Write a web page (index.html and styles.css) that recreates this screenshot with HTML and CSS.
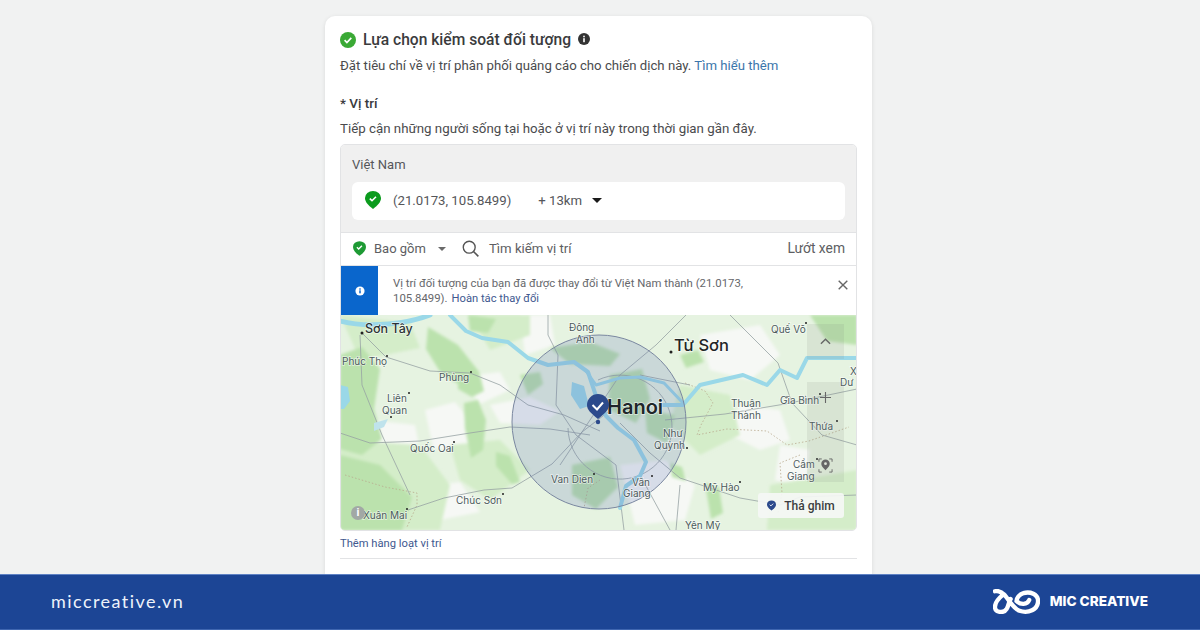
FILE: index.html
```html
<!DOCTYPE html>
<html lang="vi">
<head>
    <meta charset="UTF-8">
    <title>Lựa chọn kiểm soát đối tượng</title>
    <link rel="stylesheet" href="styles.css">
</head>
<body>

    <main class="stage">
        <section class="card">
            <div class="card-head">
                <svg class="check-icon" viewBox="0 0 16 16"><circle cx="8" cy="8" r="8" fill="#3aa935"/><path d="M4.6 8.2l2.3 2.3 4.4-4.6" fill="none" stroke="#fff" stroke-width="1.7"/></svg>
                <h1 class="card-title">Lựa chọn kiểm soát đối tượng</h1>
                <svg class="info-icon" viewBox="0 0 12 12"><circle cx="6" cy="6" r="6" fill="#333"/><rect x="5.2" y="5.2" width="1.6" height="4" fill="#fff"/><rect x="5.2" y="2.7" width="1.6" height="1.6" fill="#fff"/></svg>
            </div>
            <p class="card-sub">Đặt tiêu chí về vị trí phân phối quảng cáo cho chiến dịch này. <a href="#" class="link">Tìm hiểu thêm</a></p>

            <h2 class="field-label">* Vị trí</h2>
            <p class="field-sub">Tiếp cận những người sống tại hoặc ở vị trí này trong thời gian gần đây.</p>

            <div class="location-box">
                <div class="selected">
                    <div class="country">Việt Nam</div>
                    <div class="selected-row">
                        <svg class="pin-green" viewBox="0 0 16 18"><path d="M8 18C3 14 0 11 0 7a8 7 0 0 1 16 0c0 4-3 7-8 11z" fill="#0b9b1d"/><path d="M4.8 7.6l2.2 2.1 4-4" fill="none" stroke="#fff" stroke-width="1.6"/></svg>
                        <span class="coords">(21.0173, 105.8499)</span>
                        <span class="radius">+ 13km</span>
                        <span class="caret-big"></span>
                    </div>
                </div>

                <div class="search-row">
                    <svg class="pin-small" viewBox="0 0 16 18"><path d="M8 18C3 14 0 11 0 7a8 7 0 0 1 16 0c0 4-3 7-8 11z" fill="#1e9a34"/><path d="M4.8 7.6l2.2 2.1 4-4" fill="none" stroke="#fff" stroke-width="1.7"/></svg>
                    <span class="include">Bao gồm</span>
                    <span class="caret-small"></span>
                    <svg class="search-icon" viewBox="0 0 16 16"><circle cx="6.8" cy="6.8" r="5.6" fill="none" stroke="#555" stroke-width="1.3"/><path d="M10.8 10.8l4.6 4.6" stroke="#555" stroke-width="1.5"/></svg>
                    <span class="search-text">Tìm kiếm vị trí</span>
                    <span class="browse">Lướt xem</span>
                </div>

                <div class="notice">
                    <div class="notice-side">
                        <svg viewBox="0 0 12 12"><circle cx="6" cy="6" r="5.5" fill="#fff"/><rect x="5.1" y="5.2" width="1.8" height="3.6" fill="#0a66cc"/><rect x="5.1" y="2.8" width="1.8" height="1.6" fill="#0a66cc"/></svg>
                    </div>
                    <div class="notice-text">
                        <div>Vị trí đối tượng của bạn đã được thay đổi từ Việt Nam thành (21.0173,</div>
                        <div class="notice-line"><span>105.8499).</span><a href="#" class="undo">Hoàn tác thay đổi</a></div>
                    </div>
                    <svg class="close-icon" viewBox="0 0 10 10"><path d="M.7.7l8.6 8.6M9.3.7L.7 9.3" stroke="#666" stroke-width="1.4"/></svg>
                </div>

                <div class="map">
                    <svg class="map-art" viewBox="1 0 517 215">
                        <defs>
                            <filter id="soft" x="-10%" y="-10%" width="120%" height="120%"><feGaussianBlur stdDeviation="1.6"/></filter>
                        </defs>
                        <rect x="0" width="520" height="215" fill="#e6f3e1"/>
                        <!-- pale built-up patches -->
                        <g fill="#f6f8f5" filter="url(#soft)">
                            <path d="M85 95l30-8 18 22-4 28-36-4z"/>
                            <path d="M30 105l45 5 5 25-40 8-15-20z"/>
                            <path d="M120 62l40-5 10 18-30 14z"/>
                            <path d="M150 90l40-8 30 14-20 14-40-2z"/>
                            <path d="M360 20l60-10 20 30-30 25-40-10z"/>
                            <path d="M400 90l40 5 10 30-30 10-30-15z"/>
                            <path d="M280 150l45-5 30 25-10 35-50 5z"/>
                            <path d="M440 130l30 5-5 40-30-10z"/>
                            <path d="M60 175l60-8 20 30-60 12z"/>
                            <path d="M180 0l30 0 5 30-30 10z"/>
                        </g>
                        <!-- mid green fields -->
                        <g fill="#d4edc9" filter="url(#soft)">
                            <path d="M0 125l80 5 30 40-10 45H0z"/>
                            <path d="M110 130l50-5 30 30-40 30-30-20z"/>
                            <path d="M340 70l50 10 10 40-40 20-30-30z"/>
                            <path d="M430 170l87-15v60h-90z"/>
                            <path d="M130 0l60 0 0 20-40 15z"/>
                            <path d="M0 0l70 8 10 25-60 12z"/>
                        </g>
                        <!-- green areas -->
                        <g fill="#bbe2ad" filter="url(#soft)">
                            <path d="M0 40l22-8 18 22-6 40 8 30-20 16-22-6z"/>
                            <path d="M88 12l30 18 22 28-12 16-26-14-16-26z"/>
                            <path d="M118 58l22 2 4 16-12 6-14-8z"/>
                            <path d="M124 88l14-3 8 20-3 30-12 8-6-30z"/>
                            <path d="M0 140l40 10 32 32-10 33H0z"/>
                            <path d="M156 137l14 4 10 26-8 2-16-18z"/>
                            <path d="M128 0l28 4-8 14-18-2z"/>
                            <path d="M180 60l20-3 3 12-15 11z"/>
                            <path d="M210 33l40-6 30 12-10 12-40-2z"/>
                            <path d="M270 60l32-6 8 30-14 24-28-14z"/>
                            <path d="M232 150l38-8 8 30-22 22-24-14z"/>
                            <path d="M305 95l30 5-8 28-20-10z"/>
                            <path d="M340 40l18-5 6 12-18 6z"/>
                            <path d="M330 148l12 4 4 14-14-4z"/>
                            <path d="M470 0l47 0v30l-30-4z"/>
                            <path d="M365 168l14 4 4 26-12 6z"/>
                        </g>
                        <!-- administrative borders -->
                        <g fill="none" stroke="#b9a98e" stroke-width=".8" stroke-dasharray="1.5 2">
                            <path d="M5 160l40 12 32 6 0 12-10 22"/>
                            <path d="M345 68l20 8 8 12-12 22-4 10 30-6 40 2 20 14 22-4 40-14"/>
                            <path d="M260 165l-12 8-4 20"/>
                            <path d="M460 140l-20 8 2 30-4 20"/>
                        </g>
                        <!-- roads -->
                        <g fill="none" stroke="#97a2a3" stroke-width=".8">
                            <path d="M22 18L46 42 90 56l40 2 30 12 28 20 36 10 36 16"/>
                            <path d="M0 118l30 10 50-2 50-8 40-6 40 2 40 6"/>
                            <path d="M68 195l36-12 40-8 28-2 40-24 30-32 26-20"/>
                            <path d="M20 20l2 50 20 50 28 60"/>
                            <path d="M208 0v20l10 20-2 50 20 30 40 30 8 65"/>
                            <path d="M258 65a52 52 0 1 1-30 48"/>
                            <path d="M346 0l-30 30-36 30-40 60-20 30"/>
                            <path d="M300 60l50 10"/>
                            <path d="M280 108l30 30 30 25 60 20 40 7 20-8 57-2"/>
                            <path d="M390 0l48 48 14 40 30 32 35 10"/>
                            <path d="M325 105l60-6 60-10 72-15"/>
                            <path d="M340 170l-4 45M300 160l30 55"/>
                        </g>
                        <!-- rivers -->
                        <g fill="none" stroke="#9ad8e8" stroke-linecap="round" stroke-linejoin="round">
                            <path d="M0 6C30 14 70 8 90 0" stroke-width="5"/>
                            <path d="M110 0l16 16 16 7 26 4 20 16 20 7 26-3 14 10 8 24 10 20 12 12 16 12 12 22-6 14-14 10-6 22" stroke-width="4"/>
                            <path d="M246 56l10 14 24-7 20-1 24 6 19 20" stroke-width="3"/>
                            <path d="M320 90l23 0 17-20 43-10 24 10 13-15 17 8 10-20 50 0" stroke-width="4"/>
                        </g>
                        <path d="M0 70l8 2 2 14-6 8-4 0z" fill="#9ad8e8"/>
                        <path d="M232 67l12 4 5 20-9 3-9-14z" fill="#9ad8e8"/>
                        <path d="M34 108l14-4-4 8-10 4z" fill="#bfe3ec"/>
                        <!-- radius circle -->
                        <circle cx="259" cy="107" r="87" fill="#5a6fb5" fill-opacity=".2" stroke="#7a87a0" stroke-width="1"/>
                        <!-- towns -->
                        <g fill="#222">
                            <circle cx="22" cy="18" r="1.5"/><circle cx="47" cy="41" r="1"/><circle cx="131" cy="57" r="1"/><circle cx="69" cy="78" r="1"/>
                            <circle cx="114" cy="127" r="1"/><circle cx="163" cy="179" r="1"/><circle cx="67" cy="194" r="1"/><circle cx="254" cy="159" r="1"/>
                            <circle cx="331" cy="37" r="1.5"/><circle cx="447" cy="82" r="1"/><circle cx="347" cy="133" r="1"/><circle cx="312" cy="161" r="1"/>
                            <circle cx="400" cy="167" r="1"/><circle cx="466" cy="8" r="1"/><circle cx="480" cy="79" r="1"/><circle cx="497" cy="106" r="1"/><circle cx="477" cy="144" r="1"/>
                            <circle cx="51" cy="102" r="1"/>
                        </g>
                        <!-- labels -->
                        <text class="lbl big" x="25" y="18">Sơn Tây</text>
                        <text class="lbl" x="2" y="50">Phúc Thọ</text>
                        <text class="lbl" x="99" y="66">Phùng</text>
                        <text class="lbl" x="47" y="87">Liên</text>
                        <text class="lbl" x="42" y="99">Quan</text>
                        <text class="lbl" x="70" y="137">Quốc Oai</text>
                        <text class="lbl" x="116" y="189">Chúc Sơn</text>
                        <text class="lbl" x="23" y="204">Xuân Mai</text>
                        <text class="lbl" x="229" y="16">Đông</text>
                        <text class="lbl" x="236" y="28">Anh</text>
                        <text class="lbl" x="211" y="168">Van Dien</text>
                        <text class="lbl" x="292" y="171">Văn</text>
                        <text class="lbl" x="283" y="182">Giang</text>
                        <text class="lbl" x="323" y="122">Như</text>
                        <text class="lbl" x="314" y="134">Quỳnh</text>
                        <text class="lbl" x="363" y="176">Mỹ Hào</text>
                        <text class="lbl" x="431" y="18">Quế Võ</text>
                        <text class="lbl" x="391" y="92">Thuận</text>
                        <text class="lbl" x="391" y="104">Thành</text>
                        <text class="lbl" x="440" y="89">Gia Bình</text>
                        <text class="lbl" x="469" y="115">Thứa</text>
                        <text class="lbl" x="453" y="153">Cẩm</text>
                        <text class="lbl" x="447" y="165">Giang</text>
                        <text class="lbl" x="510" y="60">X</text>
                        <text class="lbl" x="500" y="71">Dư</text>
                        <text class="lbl" x="345" y="214">Yên Mỹ</text>
                        <text class="lbl huge" x="267" y="99">Hanoi</text>
                        <text class="lbl mid" x="334" y="36">Từ Sơn</text>
                        <!-- centre pin -->
                        <path d="M258 104c-7-6-11-9-11-14a11 11 0 0 1 22 0c0 5-4 8-11 14z" fill="#2c4a8c"/>
                        <path d="M252.500 90l4.500 4.500 6-7" fill="none" stroke="#fff" stroke-width="2"/>
                        <circle cx="258" cy="107" r="2.200" fill="#2c4a8c"/>
                    </svg>

                    <div class="map-btn map-btn-up">
                        <svg viewBox="0 0 12 7"><path d="M1 6l5-5 5 5" fill="none" stroke="#666" stroke-width="1.500"/></svg>
                    </div>
                    <div class="map-btn map-btn-tools">
                        <svg class="plus" viewBox="0 0 12 12"><path d="M6 0v12M0 6h12" stroke="#666" stroke-width="1.200"/></svg>
                        <svg class="locate" viewBox="0 0 16 16"><path d="M1 4V1h3M12 1h3v3M15 12v3h-3M4 15H1v-3" fill="none" stroke="#666" stroke-width="1"/><path d="M8 13c-3-3-4.500-5-4.500-7a4.500 4.500 0 0 1 9 0c0 2-1.500 4-4.500 7z" fill="#666"/><circle cx="8" cy="6" r="1.500" fill="#dfe5da"/></svg>
                    </div>
                    <div class="drop-pin">
                        <svg viewBox="0 0 16 18"><path d="M8 18C3 14 0 11 0 7a8 7 0 0 1 16 0c0 4-3 7-8 11z" fill="#2c4a8c"/><path d="M4.800 7.600l2.200 2.100 4-4" fill="none" stroke="#fff" stroke-width="1.600"/></svg>
                        <span>Thả ghim</span>
                    </div>
                    <div class="map-info">i</div>
                </div>
            </div>

            <a href="#" class="bulk-link">Thêm hàng loạt vị trí</a>
            <div class="divider"></div>
        </section>
    </main>

    <footer class="brand-bar">
        <span class="brand-url">miccreative.vn</span>
        <div class="brand-logo">
            <svg viewBox="0 0 48 25"><path d="M2 2c4-1 7 1 10 4 5 6 9 14 15 16 9 3 19-1 19-10 0-7-8-10-15-8-4 1-7 5-7 8 4 4 11 4 13-1M11 5C6 9 2 14 2 18c0 6 9 7 12 2 2-3 2-7 4-10" fill="none" stroke="#fff" stroke-width="4.400" stroke-linecap="round"/></svg>
            <span class="brand-name">MIC CREATIVE</span>
        </div>
    </footer>

</body>
</html>
```

FILE: styles.css
```css
:root {
    --page-bg: #f1f2f2;
    --text-dark: #3a3b3d;
    --text-body: #4a4b4d;
    --link-blue: #3b76ab;
    --link-navy: #41598f;
    --brand-blue: #1c4595;
    --border: #e2e3e5;
}

html, body { height: 100%; }

body {
    margin: 0;
    width: 1200px;
    height: 630px;
    overflow: hidden;
    display: flex;
    flex-direction: column;
    background-color: var(--page-bg);
    color: var(--text-dark);
    font-family: Roboto, "Liberation Sans", sans-serif;
}

.stage {
    height: 574px;
    overflow: hidden;
    padding: 16px 0 0 325px;
    box-sizing: border-box;
}

.card {
    width: 547px;
    height: 600px;
    padding: 15px 15px 0;
    box-sizing: border-box;
    background-color: #fff;
    border-radius: 10px;
    box-shadow: 0 1px 4px rgba(0,0,0,0.1);
}

.card-head { display: flex; align-items: center; height: 18px; }
.check-icon { width: 16px; height: 16px; margin-right: 7px; }
.card-title { margin: 0; font-size: 15.6px; font-weight: 500; line-height: 18px; color: var(--text-dark); }
.info-icon { width: 12px; height: 12px; margin-left: 7px; margin-bottom: 2px; }

.card-sub { margin: 8px 0 0; font-size: 13.2px; line-height: 18px; color: var(--text-body); }
.link { color: var(--link-blue); text-decoration: none; }

.field-label { margin: 19px 0 0; font-size: 13.5px; font-weight: 500; line-height: 18px; color: var(--text-dark); }
.field-sub { margin: 8px 0 0; font-size: 13.3px; line-height: 18px; color: var(--text-body); }

.location-box {
    width: 517px;
    margin-top: 6px;
    border: 1px solid var(--border);
    border-radius: 5px;
    box-sizing: border-box;
    overflow: hidden;
    background: #fff;
}

.selected { height: 87px; padding: 11px 11px 0; box-sizing: border-box; background-color: #f0f0f0; }
.country { font-size: 13px; line-height: 18px; color: #55565a; }
.selected-row {
    display: flex; align-items: center;
    height: 36px; margin-top: 8px; padding: 0 0 2px 13px;
    background-color: #fff; border-radius: 6px;
    font-size: 13.2px; color: #55565a;
}
.pin-green { width: 16px; height: 18px; margin-right: 12px; }
.radius { margin-left: 27px; }
.caret-big {
    width: 0; height: 0; margin-left: 10px; margin-top: 1px;
    border-left: 5px solid transparent; border-right: 5px solid transparent; border-top: 5px solid #1a1a1a;
}

.search-row {
    display: flex; align-items: center;
    height: 30px; padding: 0 11px 2px 12px;
    border-top: 1px solid var(--border);
    font-size: 13px; color: #5d5e62;
}
.pin-small { width: 13px; height: 15px; margin-right: 8px; }
.caret-small {
    width: 0; height: 0; margin-left: 12px; margin-top: 2px;
    border-left: 4px solid transparent; border-right: 4px solid transparent; border-top: 4px solid #6a6a6a;
}
.search-icon { width: 17px; height: 17px; margin-left: 16px; margin-right: 10px; }
.search-text { font-size: 13.2px; }
.browse { margin-left: auto; font-size: 13.8px; }

.notice { display: flex; height: 49px; border-top: 1px solid var(--border); align-items: stretch; }
.notice-side { width: 37px; display: flex; align-items: center; justify-content: center; background-color: #0a66cc; }
.notice-side svg { width: 10px; height: 10px; }
.notice-text { width: 400px; margin-left: 15px; padding-top: 10px; font-size: 11.35px; line-height: 15px; color: #66676b; }
.notice-line { display: flex; gap: 4px; }
.undo { color: var(--link-navy); text-decoration: none; font-size: 11.2px; }
.close-icon { width: 10px; height: 10px; margin: 14px 0 0 45px; }

.map { position: relative; height: 215px; overflow: hidden; }
.map-art { display: block; width: 517px; height: 215px; }

.lbl { font-family: Inter, Roboto, sans-serif; font-size: 10px; fill: #4c5a5c; paint-order: stroke; stroke: rgba(255,255,255,.6); stroke-width: 1.500px; }
.lbl.big { font-size: 12.500px; font-weight: 500; fill: #2b3335; }
.lbl.mid { font-size: 16.500px; font-weight: 500; fill: #1f2526; }
.lbl.huge { font-size: 20px; font-weight: 600; fill: #20262a; }

/* map controls sit over the map */
.map-btn { position: absolute; left: 466px; width: 37px; background-color: rgba(120,130,120,.13); display: flex; }
.map-btn-up { top: 9px; height: 35px; align-items: center; justify-content: center; }
.map-btn-up svg { width: 11px; height: 7px; }
.map-btn-tools { top: 67px; height: 100px; flex-direction: column; align-items: center; }
.map-btn-tools .plus { width: 11px; height: 11px; margin-top: 10px; }
.map-btn-tools .locate { width: 15px; height: 15px; margin-top: 55px; }

.drop-pin {
    position: absolute; left: 417px; top: 178px;
    width: 86px; height: 25px;
    display: flex; align-items: center; justify-content: center; gap: 8px;
    background-color: rgba(245,247,245,.92); border-radius: 3px;
    font-size: 12px; font-weight: 500; color: #3b3e40;
}
.drop-pin svg { width: 9px; height: 11px; }

.map-info {
    position: absolute; left: 10px; top: 191px;
    width: 14px; height: 14px; border-radius: 50%;
    background-color: #a2a8a5; color: #fff;
    font-size: 11px; font-weight: 700; line-height: 14px; text-align: center;
}

.bulk-link { display: block; margin-top: 5px; font-size: 11.2px; line-height: 15px; color: var(--link-navy); text-decoration: none; }
.divider { width: 517px; height: 1px; margin-top: 7px; background-color: var(--border); }

.brand-bar {
    flex: 1;
    display: flex; align-items: center; justify-content: space-between;
    padding: 0 52px 2px 51px;
    background-color: var(--brand-blue);
    border-top: 1px solid #5f82c4;
    border-bottom: 1px solid #3f66b0;
    color: #fff;
}
.brand-url { font-family: Lato, sans-serif; font-size: 18px; letter-spacing: 1.450px; color: #eef3fb; }
.brand-logo { display: flex; align-items: center; gap: 10px; }
.brand-logo svg { width: 47px; height: 25px; }
.brand-name { font-family: Inter, sans-serif; font-size: 13.600px; font-weight: 800; }
```
